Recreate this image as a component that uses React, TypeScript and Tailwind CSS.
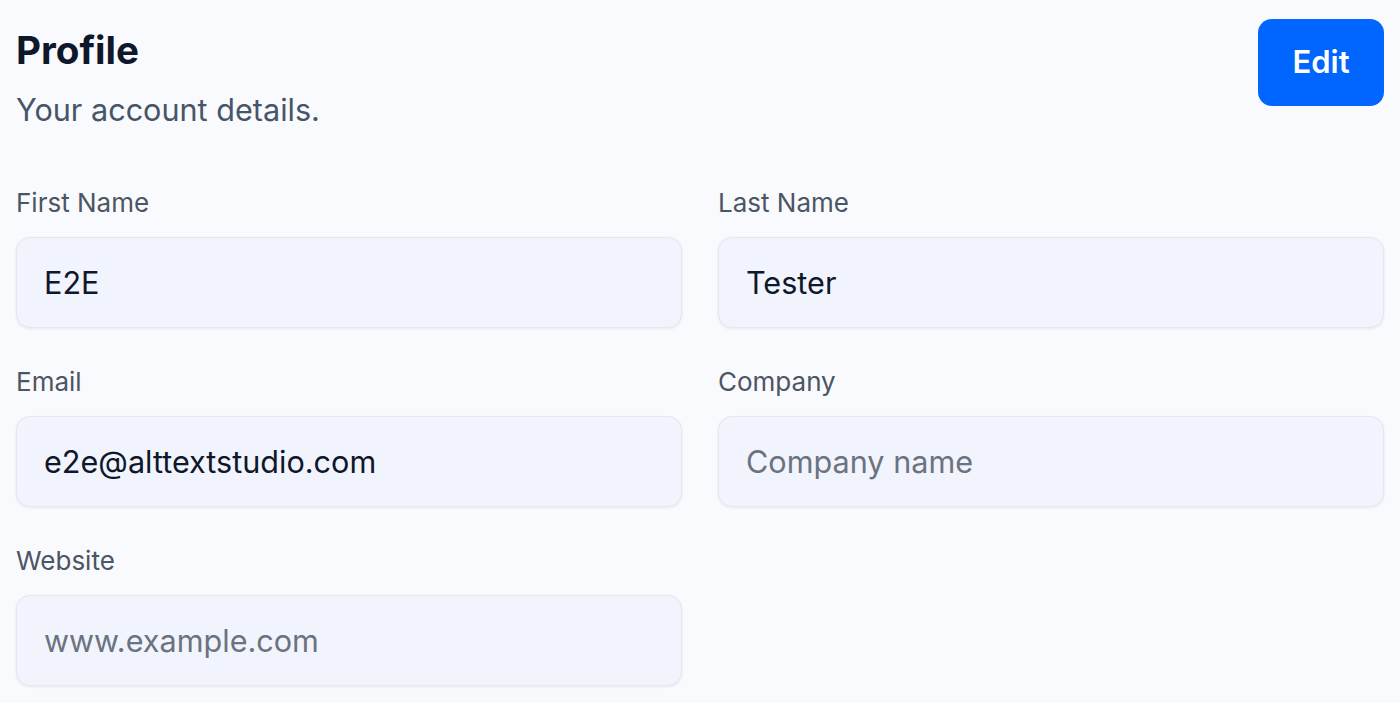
import React from "react";

function Field({
  label,
  value,
  placeholder,
}: {
  label: string;
  value?: string;
  placeholder?: string;
}) {
  return (
    <div className="flex flex-col">
      <label className="text-[26px] leading-[36px] text-[#4b5563] mb-[16px]">{label}</label>
      <input
        readOnly
        defaultValue={value}
        placeholder={placeholder}
        className="h-[91px] w-full rounded-[14px] border border-[#e4e7ee] bg-[#f1f4fc] px-[27px] text-[30.6px] text-[#0f172a] placeholder:text-[#6b7280] shadow-[0_1px_3px_rgba(15,23,42,0.08)] outline-none"
        style={{ fontFamily: "Inter, 'Noto Sans', sans-serif" }}
      />
    </div>
  );
}

export default function App() {
  return (
    <div
      className="min-h-[703px] w-full bg-[#f9fafd] px-[16px] pt-[19px]"
      style={{ fontFamily: "Inter, 'Noto Sans', sans-serif" }}
    >
      <div className="flex items-start justify-between">
        <div className="pt-[8px]">
          <h1 className="text-[38.6px] leading-[46px] font-bold text-[#0f172a]">Profile</h1>
          <p className="mt-[16px] text-[30.6px] leading-[42px] text-[#475569]">Your account details.</p>
        </div>
        <button className="h-[87px] w-[126px] rounded-[14px] bg-[#0066ff] text-[31px] font-semibold text-white">
          Edit
        </button>
      </div>
      <div className="mt-[54px] grid grid-cols-2 gap-x-[36px] gap-y-[36px]">
        <Field label="First Name" value="E2E" />
        <Field label="Last Name" value="Tester" />
        <Field label="Email" value="e2e@alttextstudio.com" />
        <Field label="Company" placeholder="Company name" />
        <Field label="Website" placeholder="www.example.com" />
      </div>
    </div>
  );
}
